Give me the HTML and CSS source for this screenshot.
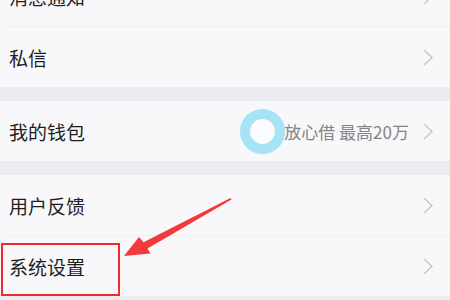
FILE: index.html
```html
<!DOCTYPE html>
<html lang="zh">
<head>
<meta charset="utf-8">
<link rel="stylesheet" href="styles.css">
</head>
<body>
<div class="page">
  <div class="group group-first">
    <div class="row">
      <span class="label">消息通知</span>
      <span class="right"><svg class="chev" viewBox="0 0 10 17"><path d="M1 1 L9 8.5 L1 16"/></svg></span>
    </div>
    <div class="divider"></div>
    <div class="row">
      <span class="label">私信</span>
      <span class="right"><svg class="chev" viewBox="0 0 10 17"><path d="M1 1 L9 8.5 L1 16"/></svg></span>
    </div>
  </div>
  <div class="group">
    <div class="row">
      <span class="label">我的钱包</span>
      <span class="right"><span class="hint">放心借 最高20万</span><svg class="chev" viewBox="0 0 10 17"><path d="M1 1 L9 8.5 L1 16"/></svg></span>
    </div>
  </div>
  <div class="group">
    <div class="row">
      <span class="label">用户反馈</span>
      <span class="right"><svg class="chev" viewBox="0 0 10 17"><path d="M1 1 L9 8.5 L1 16"/></svg></span>
    </div>
    <div class="divider"></div>
    <div class="row">
      <span class="label">系统设置</span>
      <span class="right"><svg class="chev" viewBox="0 0 10 17"><path d="M1 1 L9 8.5 L1 16"/></svg></span>
    </div>
  </div>

  <div class="touch"></div>
  <div class="redbox"></div>
  <svg class="arrow" viewBox="0 0 450 300" width="450" height="300">
    <polygon points="124,256 139,237 143.5,242.3 230.5,198 231.5,199.5 147.5,248.5 150.5,253.5"/>
  </svg>
</div>
</body>
</html>
```

FILE: styles.css
```css
html, body {
  margin: 0;
  padding: 0;
}
body {
  background: #ecebf0;
  font-family: "Noto Sans CJK SC", "Noto Sans", sans-serif;
  width: 450px;
  height: 300px;
  overflow: hidden;
}
.page {
  position: relative;
  width: 450px;
  height: 300px;
  overflow: hidden;
}
.group {
  background: #f8f7fa;
  margin-bottom: 14px;
}
.group-first {
  margin-top: -34px;
}
.row {
  height: 60px;
  display: flex;
  align-items: center;
  justify-content: space-between;
  padding: 0 17px 0 9px;
  box-sizing: border-box;
}
.label {
  font-size: 19px;
  color: #1e1e1e;
  line-height: 1;
}
.right {
  display: flex;
  align-items: center;
  gap: 14px;
}
.hint {
  font-size: 17px;
  color: #858585;
  line-height: 1;
}
.chev {
  width: 10px;
  height: 17px;
  display: block;
}
.chev path {
  fill: none;
  stroke: #c6c6c8;
  stroke-width: 1.4;
}
.divider {
  height: 1px;
  margin-left: 8px;
  background: #efeef2;
}
.touch {
  position: absolute;
  left: 240px;
  top: 109px;
  width: 25px;
  height: 25px;
  border: 10px solid #a6e3f7;
  border-radius: 50%;
  background: #fbfbfd;
}
.redbox {
  position: absolute;
  left: 1px;
  top: 243px;
  width: 119px;
  height: 53px;
  border: 2px solid #ee2b2e;
  box-sizing: border-box;
}
.arrow {
  position: absolute;
  left: 0;
  top: 0;
}
.arrow polygon {
  fill: #f23a3c;
}
```
